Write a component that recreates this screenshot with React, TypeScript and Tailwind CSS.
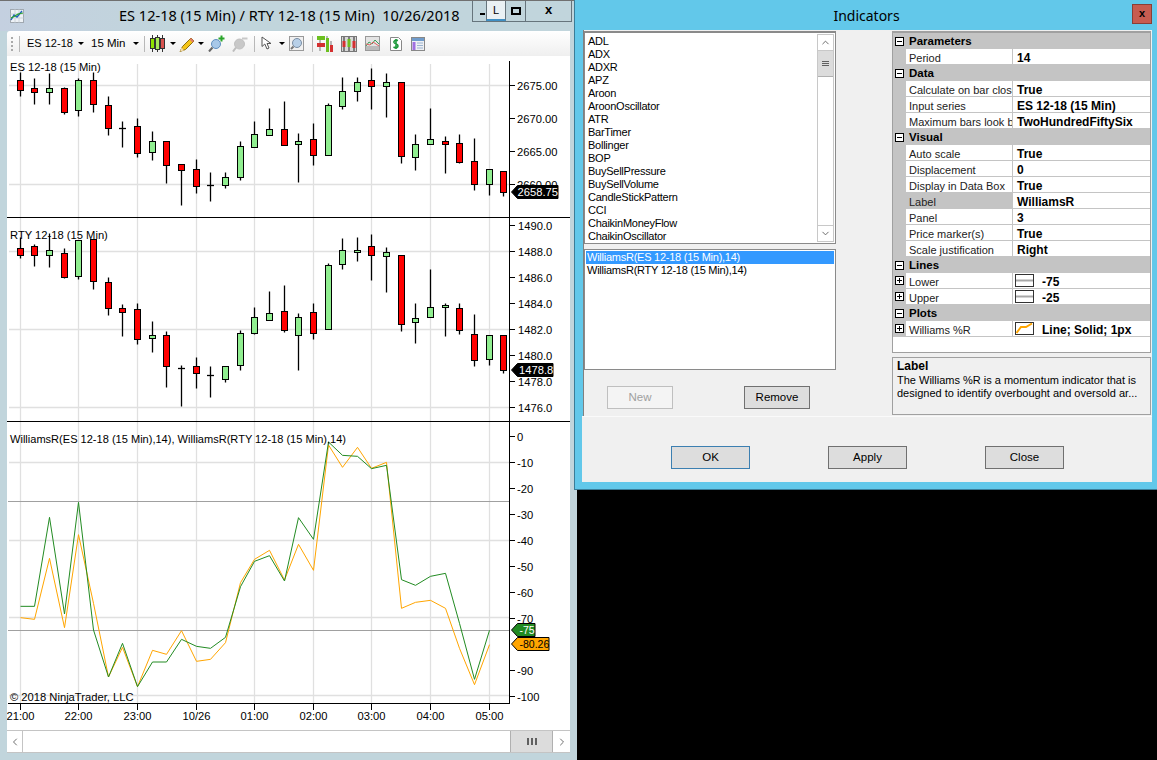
import { ChevronDown, ChevronLeft, ChevronRight, ChevronUp } from "lucide-react";

const xs = [20.5, 34.5, 49.5, 64.5, 78.5, 93.5, 108.5, 122.5, 137.5, 152.5, 166.5, 181.5, 196.5, 210.5, 225.5, 240.5, 254.5, 269.5, 284.5, 298.5, 313.5, 328.5, 342.5, 357.5, 371.5, 386.5, 401.5, 415.5, 430.5, 445.5, 459.5, 474.5, 489.5, 503.5];

// wick top, wick bottom, body top, body bottom, color (in 3x crop coordinates)
type Bar = [number, number, number, number, "r" | "g" | "d"];

const esBars: Bar[] = [
  [215, 288, 241, 271, "r"], [234, 312, 265, 275, "r"], [219, 312, 265, 275, "g"], [262, 341, 265, 335, "r"],
  [235, 348, 241, 331, "g"], [217, 336, 241, 311, "r"], [288, 405, 316, 385, "r"], [363, 441, 385, 385, "d"],
  [354, 471, 379, 458, "r"], [393, 480, 424, 455, "g"], [424, 549, 424, 494, "r"], [493, 615, 493, 509, "r"],
  [477, 579, 508, 557, "r"], [516, 603, 556, 556, "d"], [516, 564, 532, 554, "g"], [423, 540, 439, 530, "g"],
  [363, 440, 403, 440, "g"], [324, 404, 388, 404, "g"], [303, 434, 388, 434, "r"], [399, 546, 424, 431, "g"],
  [369, 495, 418, 464, "r"], [310, 464, 316, 464, "g"], [232, 327, 274, 317, "g"], [232, 303, 247, 274, "g"],
  [205, 327, 241, 257, "r"], [219, 351, 247, 257, "g"], [247, 489, 247, 469, "r"], [403, 510, 433, 472, "g"],
  [325, 433, 418, 433, "g"], [408, 519, 424, 431, "r"], [403, 489, 430, 485, "r"], [414, 570, 484, 553, "r"],
  [508, 585, 508, 553, "g"], [514, 588, 514, 577, "r"],
];

const rtyBars: Bar[] = [
  [65, 128, 100, 121, "r"], [88, 152, 94, 121, "r"], [55, 155, 106, 121, "g"], [100, 188, 115, 185, "r"],
  [75, 193, 76, 184, "g"], [72, 221, 73, 199, "r"], [187, 299, 202, 280, "r"], [267, 362, 280, 292, "r"],
  [265, 386, 283, 373, "r"], [318, 410, 361, 370, "g"], [349, 515, 361, 454, "r"], [450, 572, 459, 459, "d"],
  [426, 518, 454, 475, "r"], [453, 545, 480, 480, "d"], [454, 500, 454, 493, "g"], [345, 464, 355, 451, "g"],
  [276, 357, 307, 355, "g"], [228, 316, 295, 316, "g"], [210, 350, 289, 346, "r"], [295, 465, 307, 361, "g"],
  [264, 371, 292, 355, "r"], [145, 343, 151, 343, "g"], [69, 161, 106, 148, "g"], [66, 137, 106, 112, "g"],
  [57, 195, 94, 121, "r"], [96, 231, 112, 124, "g"], [121, 347, 121, 328, "r"], [264, 384, 310, 322, "g"],
  [162, 307, 277, 307, "g"], [264, 362, 271, 277, "g"], [264, 356, 280, 346, "r"], [297, 452, 358, 436, "r"],
  [361, 449, 361, 433, "g"], [361, 473, 361, 466, "r"],
];

const greenLine = [529, 529, 262, 552, 217, 600, 741, 640, 770, 696, 696, 628, 649, 655, 622, 470, 394, 377, 453, 263, 328, 36, 76, 79, 116, 106, 449, 466, 439, 430, 580, 748, 601];
const orangeLine = [563, 568, 385, 593, 314, 520, 741, 652, 770, 661, 673, 602, 694, 688, 638, 458, 388, 361, 450, 343, 421, 45, 112, 52, 115, 97, 535, 517, 511, 535, 655, 764, 644];

const timeXs = [20.5, 78.5, 137.5, 196.5, 254.5, 313.5, 371.5, 430.5, 489.5];
const timeLabels = ["21:00", "22:00", "23:00", "10/26", "01:00", "02:00", "03:00", "04:00", "05:00"];

const crisp = (v: number) => Math.round(v / 3) + 0.5;

function Candles({ bars, top }: { bars: Bar[]; top: number }) {
  return (
    <g>
      {bars.map((b, i) => {
        const x = xs[i];
        const bodyTop = top + crisp(b[2]);
        const bodyBottom = top + crisp(b[3]);
        return (
          <g key={i}>
            <line x1={x} x2={x} y1={top + crisp(b[0])} y2={top + crisp(b[1])} stroke="#000" strokeWidth={1.3} />
            {b[4] === "d" ? (
              <line x1={x - 3.5} x2={x + 3.5} y1={bodyTop} y2={bodyTop} stroke="#000" strokeWidth={1.3} />
            ) : (
              <rect x={x - 3} y={bodyTop} width={6} height={bodyBottom - bodyTop} fill={b[4] === "r" ? "#ff0000" : "#90ee90"} stroke="#000" />
            )}
          </g>
        );
      })}
    </g>
  );
}

function VGrid({ y1, y2 }: { y1: number; y2: number }) {
  return (
    <g>
      {timeXs.map((x) => (
        <line key={x} x1={x} x2={x} y1={y1} y2={y2} stroke="#e0e0e0" strokeWidth={1.3} />
      ))}
    </g>
  );
}

function HGrid({ ys }: { ys: number[] }) {
  return (
    <g>
      {ys.map((y) => (
        <line key={y} x1={9} x2={509} y1={y + 0.5} y2={y + 0.5} stroke="#e0e0e0" strokeWidth={1.3} />
      ))}
    </g>
  );
}

function AxisLabels({ items, x = 517 }: { items: [string, number][]; x?: number }) {
  return (
    <g>
      {items.map(([t, y]) => (
        <g key={t}>
          <line x1={510} x2={515} y1={y + 0.5} y2={y + 0.5} stroke="#000" />
          <text x={x} y={y + 4.5} fontSize={11.2} fill="#000">{t}</text>
        </g>
      ))}
    </g>
  );
}

function Marker({ y, w, h, fill, text, textX, textSize = 11.2, textFill, stroke }: { y: number; w: number; h: number; fill: string; text: string; textX: number; textSize?: number; textFill: string; stroke: string }) {
  const mid = y + h / 2;
  return (
    <g>
      <path d={`M511.5 ${mid} L517.5 ${y + 0.5} H${511 + w} V${y + h - 0.5} H517.5 Z`} fill={fill} stroke={stroke} />
      <text x={textX} y={mid + 4} fontSize={textSize} fill={textFill}>{text}</text>
    </g>
  );
}

function EsPanel() {
  const labels: [string, number][] = [["2675.00", 85], ["2670.00", 118], ["2665.00", 151], ["2660.00", 184]];
  return (
    <svg className="block w-[563px] h-[161px] font-['Liberation_Sans',sans-serif]" viewBox="7 56 563 161">
      <VGrid y1={64} y2={217} />
      <HGrid ys={[85, 184]} />
      <Candles bars={esBars} top={0} />
      <text x={10} y={71} fontSize={11.2} fill="#000">ES 12-18 (15 Min)</text>
      <line x1={509.5} x2={509.5} y1={61} y2={217} stroke="#000" />
      <AxisLabels items={labels} />
      <Marker y={185} w={47} h={14} fill="#000" stroke="#000" text="2658.75" textX={517.5} textFill="#fff" />
    </svg>
  );
}

function RtyPanel() {
  const labels: [string, number][] = [["1490.0", 225], ["1488.0", 251], ["1486.0", 277], ["1484.0", 303], ["1482.0", 329], ["1480.0", 355], ["1478.0", 381], ["1476.0", 407]];
  return (
    <svg className="block w-[563px] h-[203px] font-['Liberation_Sans',sans-serif]" viewBox="7 218 563 203">
      <VGrid y1={218} y2={421} />
      <HGrid ys={[251, 329, 407]} />
      <Candles bars={rtyBars} top={215} />
      <text x={10} y={239} fontSize={11.2} fill="#000">RTY 12-18 (15 Min)</text>
      <line x1={509.5} x2={509.5} y1={218} y2={421} stroke="#000" />
      <AxisLabels items={labels} x={518} />
      <Marker y={363} w={42} h={14} fill="#000" stroke="#000" text="1478.8" textX={519} textFill="#fff" />
    </svg>
  );
}

function WilliamsPanel() {
  const ticks = [0, 10, 20, 30, 40, 50, 60, 70, 80, 90, 100];
  const labels: [string, number][] = ticks.filter((t) => t !== 80).map((t) => [t === 0 ? "0" : `-${t}`, 436 + t * 2.6]);
  const pts = (line: number[]) => line.map((v, i) => `${xs[i]},${430 + v / 3}`).join(" ");
  return (
    <svg className="block w-[563px] h-[308px] font-['Liberation_Sans',sans-serif]" viewBox="7 422 563 308">
      <VGrid y1={422} y2={703} />
      <HGrid ys={[462, 540, 617, 695]} />
      <line x1={8} x2={509} y1={501.5} y2={501.5} stroke="#a0a0a0" />
      <line x1={8} x2={509} y1={630.5} y2={630.5} stroke="#a0a0a0" />
      <polyline points={pts(orangeLine)} fill="none" stroke="#ffa500" />
      <polyline points={pts(greenLine)} fill="none" stroke="#228b22" />
      <text x={10} y={443} fontSize={11.05} fill="#000">WilliamsR(ES 12-18 (15 Min),14), WilliamsR(RTY 12-18 (15 Min),14)</text>
      <text x={10} y={701} fontSize={11.2} fill="#000">© 2018 NinjaTrader, LLC</text>
      <line x1={8} x2={510} y1={703.5} y2={703.5} stroke="#000" />
      <line x1={509.5} x2={509.5} y1={422} y2={704} stroke="#000" />
      {timeXs.map((x, i) => (
        <g key={x}>
          <line x1={x} x2={x} y1={704} y2={710} stroke="#000" />
          <text x={x} y={720} fontSize={11.2} fill="#000" textAnchor="middle">{timeLabels[i]}</text>
        </g>
      ))}
      <AxisLabels items={labels} />
      <Marker y={623} w={24} h={14} fill="#228b22" stroke="#000" text="-75" textX={519.5} textSize={10.5} textFill="#fff" />
      <Marker y={637} w={38} h={14} fill="#ffa500" stroke="#000" text="-80.26" textX={519.5} textSize={10.5} textFill="#000" />
    </svg>
  );
}

function Caret({ className }: { className: string }) {
  return <span className={`${className} shrink-0 w-0 h-0 border-x-[3px] border-x-transparent border-t-[3px] border-t-black`} />;
}

function CandleIcon() {
  return (
    <svg width="15" height="17" viewBox="0 0 15 17">
      <path d="M2.5 0V17M7.5 0V17M12.5 0V17" stroke="#333" />
      <rect x="0.5" y="3.5" width="4" height="10" fill="#8fe000" stroke="#333" />
      <rect x="5.5" y="2.5" width="4" height="12" fill="#a8e85a" stroke="#333" />
      <rect x="10.5" y="3.5" width="4" height="10" fill="#d9534f" stroke="#333" />
    </svg>
  );
}

function PencilIcon() {
  return (
    <svg className="ml-[3px]" width="16" height="16" viewBox="0 0 16 16">
      <path d="M3.5 10.5L12 2L15 5L6.5 13.5L1 15.5Z" fill="#f5c518" stroke="#8a6d10" />
      <path d="M12 2L15 5L13.5 6.5L10.5 3.5Z" fill="#e07b6a" />
      <path d="M1 15.5L2.5 11.5L5 14.5Z" fill="#f3dcae" />
    </svg>
  );
}

function PinIcon() {
  return (
    <svg className="ml-[4px]" width="17" height="17" viewBox="0 0 17 17">
      <circle cx="8" cy="9" r="4.5" fill="#a8c8e8" stroke="#6090c0" />
      <path d="M4.5 12.5L1 16.5" stroke="#666" strokeWidth="2" />
      <path d="M13.5 0.5V6.5M10.5 3.5H16.5" stroke="#2aa52a" strokeWidth="2" />
    </svg>
  );
}

function MutedPinIcon() {
  return (
    <svg className="ml-[7px]" width="16" height="17" viewBox="0 0 16 17">
      <circle cx="7.5" cy="9" r="5" fill="#c8c8c8" stroke="#c0c0c0" />
      <path d="M4 12.5L1 16.5" stroke="#bdbdbd" strokeWidth="2" />
      <path d="M10 3.5H15.5" stroke="#c8c8c8" strokeWidth="2" />
    </svg>
  );
}

function ArrowIcon() {
  return (
    <svg className="ml-[6px]" width="12" height="15" viewBox="0 0 12 15">
      <path d="M1 1L1 10.5L3.8 8L6 13L8 12L6 7.5L10 7.5Z" fill="#fff" stroke="#555" />
    </svg>
  );
}

function ZoomIcon() {
  return (
    <svg className="ml-[4px]" width="15" height="15" viewBox="0 0 15 15">
      <rect x="0.5" y="0.5" width="14" height="14" fill="#f1f1f1" stroke="#999" />
      <circle cx="8" cy="7" r="4.5" fill="#b8d0e8" stroke="#7a8ea4" />
      <path d="M4.5 10.5L2 13" stroke="#777" strokeWidth="2" />
    </svg>
  );
}

function ToolbarIcons() {
  return (
    <>
      <svg className="ml-[4px]" width="17" height="17" viewBox="0 0 17 17">
        <path d="M3 1V16M10 1V17M14 6V17" stroke="#777" />
        <rect x="0" y="1" width="8" height="4" fill="#6cc020" />
        <rect x="0" y="8" width="8" height="4" fill="#d43030" />
        <rect x="9" y="3" width="3" height="14" fill="#6cc020" />
        <rect x="13" y="10" width="3" height="7" fill="#d43030" />
      </svg>
      <svg className="ml-[7px]" width="16" height="16" viewBox="0 0 16 16">
        <rect x="0.5" y="0.5" width="15" height="15" fill="#d8d8d8" stroke="#777" />
        <path d="M3 1V15M8 1V15M13 1V15" stroke="#222" />
        <rect x="1.5" y="5" width="3" height="6" fill="#d43030" />
        <rect x="6.5" y="3" width="3" height="8" fill="#6cc020" />
        <rect x="11.5" y="5" width="3" height="7" fill="#d43030" />
      </svg>
      <svg className="ml-[8px]" width="15" height="15" viewBox="0 0 15 15">
        <rect x="0.5" y="0.5" width="14" height="14" fill="#e4e4e4" stroke="#999" />
        <rect x="1" y="10" width="13" height="4" fill="#bbb" />
        <path d="M1 10L4 6L7 8L10 4L14 8" fill="none" stroke="#3aa05a" />
        <path d="M1 8L5 9L8 6L11 8L14 10" fill="none" stroke="#e06060" />
      </svg>
      <svg className="ml-[10px]" width="12" height="14" viewBox="0 0 12 14">
        <path d="M0.5 0.5H8.5L11.5 3.5V13.5H0.5Z" fill="#fff" stroke="#888" />
        <path d="M8 3.5C5 2.5 3.5 4 4 5.5C5 7.5 8 6.5 8 9C8 10.5 6 11.5 3.5 10M6 2V12" fill="none" stroke="#1e9a3c" strokeWidth="1.6" />
      </svg>
      <svg className="ml-[9px]" width="14" height="14" viewBox="0 0 14 14">
        <rect x="0.5" y="0.5" width="13" height="13" fill="#eef0f4" stroke="#888" />
        <rect x="1" y="1" width="12" height="3" fill="#6f9ccc" />
        <rect x="1.5" y="5" width="3" height="8" fill="#a070e0" />
        <path d="M6 6H12M6 8.5H12M6 11H12" stroke="#9cb4d0" />
      </svg>
    </>
  );
}

function Toolbar() {
  return (
    <div className="flex items-center h-[25px] ml-[7px] mr-[7px] pl-[4px] rounded-tl-[3px] bg-gradient-to-b from-white to-[#efefef] text-black">
      <span className="w-[2px] h-[14px] border-l-2 border-dotted border-[#aaa]" />
      <span className="w-px h-[16px] bg-[#b8b8b8] ml-[6px]" />
      <span className="ml-[7px] w-[46px] text-[11px] whitespace-nowrap">ES 12-18</span>
      <Caret className="ml-[5px]" />
      <span className="ml-[7px] w-[36px] text-[11.5px] whitespace-nowrap">15 Min</span>
      <Caret className="ml-[6px]" />
      <span className="w-px h-[16px] bg-[#b8b8b8] ml-[5px] mr-[5px]" />
      <CandleIcon />
      <Caret className="ml-[5px]" />
      <PencilIcon />
      <Caret className="ml-[3px]" />
      <PinIcon />
      <MutedPinIcon />
      <span className="w-px h-[16px] bg-[#b8b8b8] ml-[6px]" />
      <ArrowIcon />
      <Caret className="ml-[6px]" />
      <ZoomIcon />
      <span className="w-px h-[16px] bg-[#b8b8b8] ml-[8px]" />
      <ToolbarIcons />
    </div>
  );
}

function ScrollBar() {
  return (
    <div className="flex h-[23px] ml-[7px] mr-[7px] bg-white border-y border-[#c4c4c4]">
      <div className="w-[16px] flex items-center justify-center border-r border-[#c4c4c4]">
        <ChevronLeft size={12} color="#707070" />
      </div>
      <div className="flex-1" />
      <div className="w-[43px] flex items-center justify-center gap-[1px] bg-[#dcdcdc] border-x border-[#b0b0b0]">
        <span className="w-[2px] h-[7px] bg-[#606060]" />
        <span className="w-[2px] h-[7px] bg-[#606060] ml-[1px]" />
        <span className="w-[2px] h-[7px] bg-[#606060] ml-[1px]" />
      </div>
      <div className="w-[17px] flex items-center justify-center">
        <ChevronRight size={12} color="#707070" />
      </div>
    </div>
  );
}

function ChartWindow() {
  return (
    <div className="w-[577px] h-[760px] shrink-0 flex flex-col bg-[#c1d5dc] border-t border-[#707070]">
      <div className="relative h-[30px] flex items-center bg-gradient-to-r from-[#c4d0e0] from-[0%] to-[#c1d5dc] to-[30%] font-['Noto_Sans',sans-serif] text-[14.55px] text-black">
        <svg className="ml-[10px]" width="14" height="14" viewBox="0 0 14 14">
          <rect x="0.5" y="0.5" width="13" height="13" fill="#eef2f6" stroke="#a0a8b0" />
          <path d="M0.5 5H13.5M0.5 9H13.5M5 0.5V13.5M9 0.5V13.5" stroke="#ccd4dc" />
          <path d="M1 11L4 6L7 8L12 2" fill="none" stroke="#2060c0" strokeWidth="1.4" />
          <path d="M1 9L5 7L8 5L13 4" fill="none" stroke="#2aa52a" strokeWidth="1.2" />
        </svg>
        <span className="ml-[95px] whitespace-pre">ES 12-18 (15 Min) / RTY 12-18 (15 Min)  10/26/2018</span>
        <div className="absolute left-[472px] top-0 w-[100px] h-[21px] flex border border-t-0 border-[#66747c]">
          <div className="w-[13px] flex justify-end items-start pt-[12px] pr-[1px]"><span className="w-[5px] h-[2px] bg-black" /></div>
          <div className="w-[20px] flex items-center justify-center bg-[#eaf1f4] border-x border-b-2 border-x-[#66747c] border-b-[#3f8fc4] font-['Liberation_Sans',sans-serif] text-[11px]">L</div>
          <div className="w-[20px] flex items-center justify-center border-r border-[#66747c]"><span className="w-[10px] h-[8px] border-2 border-black" /></div>
          <div className="flex-1 flex items-center justify-center font-['Liberation_Sans',sans-serif] font-bold text-[13px] pb-[2px]">x</div>
        </div>
      </div>
      <Toolbar />
      <div className="ml-[7px] mr-[7px] bg-white flex flex-col">
        <EsPanel />
        <div className="h-px bg-black" />
        <RtyPanel />
        <div className="h-px bg-black" />
        <WilliamsPanel />
      </div>
      <ScrollBar />
    </div>
  );
}

const indicators = ["ADL", "ADX", "ADXR", "APZ", "Aroon", "AroonOscillator", "ATR", "BarTimer", "Bollinger", "BOP", "BuySellPressure", "BuySellVolume", "CandleStickPattern", "CCI", "ChaikinMoneyFlow", "ChaikinOscillator"];

function IndicatorList() {
  return (
    <div className="h-[213px] flex bg-white border border-t-2 border-[#8a8a8a] tracking-[-0.25px]">
      <div className="flex-1 pl-[3px] pt-[2px] overflow-hidden">
        {indicators.map((n) => (
          <div key={n} className="h-[13px] leading-[13px]">{n}</div>
        ))}
      </div>
      <div className="w-[17px] mr-[1px] mt-[1px] mb-px flex flex-col border border-[#c8c8c8]">
        <div className="h-[16px] flex items-center justify-center border-b border-[#c8c8c8]"><ChevronUp size={11} color="#606060" /></div>
        <div className="h-[26px] flex flex-col items-center justify-center gap-[1px] bg-[#dcdcdc] border-b border-[#b0b0b0]">
          <span className="w-[7px] h-px bg-[#606060]" />
          <span className="w-[7px] h-px bg-[#606060]" />
          <span className="w-[7px] h-px bg-[#606060]" />
        </div>
        <div className="flex-1" />
        <div className="h-[16px] flex items-center justify-center border-t border-[#c8c8c8]"><ChevronDown size={11} color="#606060" /></div>
      </div>
    </div>
  );
}

function AddedList() {
  return (
    <div className="mt-[5px] h-[121px] bg-white border border-[#8a8a8a] p-px tracking-[-0.25px]">
      <div className="h-[13px] leading-[13px] bg-[#3399ff] text-white pl-[1px]">WilliamsR(ES 12-18 (15 Min),14)</div>
      <div className="h-[13px] leading-[13px] pl-[1px]">WilliamsR(RTY 12-18 (15 Min),14)</div>
    </div>
  );
}

function Box({ minus }: { minus?: boolean }) {
  return (
    <span className="relative w-[9px] h-[9px] border border-black bg-white flex items-center justify-center">
      <span className="w-[5px] h-px bg-black" />
      {!minus && <span className="absolute w-px h-[5px] bg-black" />}
    </span>
  );
}

function Section({ title }: { title: string }) {
  return (
    <div className="h-[16px] flex items-center bg-[#c4c4c4] font-bold text-[11.5px]">
      <span className="w-[13px] flex justify-center"><Box minus /></span>
      <span className="pl-[3px] pt-[2px]">{title}</span>
    </div>
  );
}

function Row({ name, value, box, selected, swatch }: { name: string; value: string; box?: boolean; selected?: boolean; swatch?: "line" | "plot" }) {
  return (
    <div className="h-[16px] flex bg-white border-b border-[#c4c4c4] leading-[19px]">
      <span className="w-[13px] flex items-center justify-center bg-[#c4c4c4]">{box && <Box />}</span>
      <span className={selected ? "w-[106px] pl-[3px] overflow-hidden whitespace-nowrap bg-[#c4c4c4] text-[#222]" : "w-[106px] pl-[3px] overflow-hidden whitespace-nowrap text-[#222]"}>{name}</span>
      <span className="w-px bg-[#c4c4c4]" />
      {swatch && (
        <svg className="ml-[2px] mt-[1px]" width="19" height="13" viewBox="0 0 19 13">
          <rect x="0.5" y="0.5" width="18" height="12" fill="#fff" stroke="#333" />
          {swatch === "line" ? (
            <path d="M1 6.5H18" stroke="#a8a8a8" strokeWidth="2" />
          ) : (
            <path d="M1.5 11L6 5H11L17 1.5" fill="none" stroke="#ffa500" strokeWidth="2" />
          )}
        </svg>
      )}
      <span className={swatch ? "pl-[8px] font-bold text-[12px] whitespace-nowrap" : "pl-[4px] font-bold text-[12px] whitespace-nowrap"}>{value}</span>
    </div>
  );
}

function PropertyGrid() {
  return (
    <div className="h-[322px] bg-white border border-t-2 border-[#a0a0a0]">
      <Section title="Parameters" />
      <Row name="Period" value="14" />
      <Section title="Data" />
      <Row name="Calculate on bar close" value="True" />
      <Row name="Input series" value="ES 12-18 (15 Min)" />
      <Row name="Maximum bars look back" value="TwoHundredFiftySix" />
      <Section title="Visual" />
      <Row name="Auto scale" value="True" />
      <Row name="Displacement" value="0" />
      <Row name="Display in Data Box" value="True" />
      <Row name="Label" value="WilliamsR" selected />
      <Row name="Panel" value="3" />
      <Row name="Price marker(s)" value="True" />
      <Row name="Scale justification" value="Right" />
      <Section title="Lines" />
      <Row name="Lower" value="-75" box swatch="line" />
      <Row name="Upper" value="-25" box swatch="line" />
      <Section title="Plots" />
      <Row name="Williams %R" value="Line; Solid; 1px" box swatch="plot" />
    </div>
  );
}

function DlgButton({ label, w, tone }: { label: string; w: string; tone: "focus" | "off" | "norm" }) {
  const look = tone === "focus" ? "bg-[#dddddd] border-[#3c7fb1] text-black" : tone === "off" ? "bg-[#f4f4f4] border-[#bfbfbf] text-[#a0a0a0]" : "bg-[#dddddd] border-[#707070] text-black";
  return <div className={`${w} h-[23px] flex items-center justify-center border text-[11.5px] ${look}`}>{label}</div>;
}

function IndicatorsDialog() {
  return (
    <div className="absolute left-[574px] top-0 w-[583px] h-[490px] flex flex-col bg-[#62c8ea] border-l border-b border-[#3a7d98] font-['Liberation_Sans',sans-serif] text-[11px] text-black">
      <div className="relative h-[30px] shrink-0 flex items-center justify-center pl-[1px] font-['Noto_Sans',sans-serif] text-[14px]">
        Indicators
        <div className="absolute left-[557px] top-[4px] w-[20px] h-[20px] flex items-center justify-center bg-[#c75c50] border border-[#8a3e36] font-['Liberation_Sans',sans-serif] font-bold text-[11px] pb-[2px]">x</div>
      </div>
      <div className="ml-[8px] mr-[5px] h-[386px] shrink-0 flex bg-[#f0f0f0] border-l border-[#808080] pt-px">
        <div className="w-[252px] shrink-0">
          <IndicatorList />
          <AddedList />
          <div className="mt-[16px] ml-[23px] flex gap-[71px]">
            <DlgButton label="New" w="w-[66px]" tone="off" />
            <DlgButton label="Remove" w="w-[66px]" tone="norm" />
          </div>
        </div>
        <div className="ml-[56px] w-[259px] shrink-0 flex flex-col">
          <PropertyGrid />
          <div className="mt-[4px] h-[58px] border border-[#a0a0a0] pl-[4px] pt-[2px] leading-[13px] whitespace-nowrap">
            <div className="font-bold text-[12px] mb-px">Label</div>
            <div>The Williams %R is a momentum indicator that is</div>
            <div>designed to identify overbought and oversold ar...</div>
          </div>
        </div>
      </div>
      <div className="ml-[7px] mr-[5px] h-[66px] shrink-0 flex items-start pt-[29px] pl-[89px] gap-[78px] bg-[#f0f0f0] border-t border-[#fafafa]">
        <DlgButton label="OK" w="w-[79px]" tone="focus" />
        <DlgButton label="Apply" w="w-[79px]" tone="norm" />
        <DlgButton label="Close" w="w-[79px]" tone="norm" />
      </div>
    </div>
  );
}

export default function App() {
  return (
    <div className="relative w-[1157px] h-[760px] overflow-hidden bg-black flex font-['Liberation_Sans',sans-serif]">
      <ChartWindow />
      <IndicatorsDialog />
    </div>
  );
}
